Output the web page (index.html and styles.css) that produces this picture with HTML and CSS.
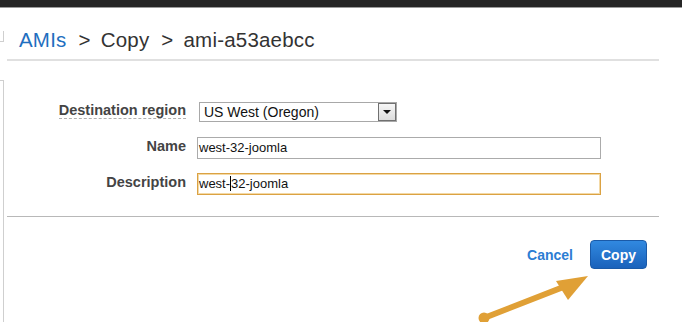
FILE: index.html
```html
<!DOCTYPE html>
<html lang="en">
<head>
<meta charset="utf-8">
<title>Copy AMI</title>
<link rel="stylesheet" href="styles.css">
</head>
<body>
<div class="topbar"></div>
<div class="layout">
  <div class="rail">
    <div class="rail-gap1"></div>
    <div class="rail-box"></div>
    <div class="rail-gap2"></div>
    <div class="rail-panel"></div>
  </div>
  <div class="main">
    <div class="crumbs">
      <a class="crumb-link" href="#">AMIs</a><span class="sep">&gt;</span><span class="crumb">Copy</span><span class="sep">&gt;</span><span class="crumb">ami-a53aebcc</span>
    </div>
    <div class="form">
      <label class="label label-help">Destination region</label>
      <div class="select">
        <span class="select-text">US West (Oregon)</span>
        <span class="select-btn"><span class="tri"></span></span>
      </div>
      <label class="label">Name</label>
      <div class="field">west-32-joomla</div>
      <label class="label">Description</label>
      <div class="field field-focus">west-<span class="caret"></span>32-joomla</div>
    </div>
    <div class="actions">
      <a class="cancel" href="#">Cancel</a>
      <button class="btn-primary" type="button">Copy</button>
    </div>
  </div>
</div>
<svg class="annot" width="682" height="322" viewBox="0 0 682 322">
  <line x1="484" y1="318" x2="566" y2="286" stroke="#e0a036" stroke-width="6" stroke-linecap="round"/>
  <circle cx="484" cy="318" r="5.5" fill="#e0a036"/>
  <polygon points="588,276 556,281 568,300" fill="#e0a036"/>
</svg>
</body>
</html>
```
FILE: styles.css
```css
html, body {
  margin: 0;
  padding: 0;
  background: #fff;
  font-family: "Liberation Sans", Arial, sans-serif;
  overflow: hidden;
}

.topbar {
  height: 7px;
  background: #252525;
  border-bottom: 1px solid #9a9a9a;
}

.layout {
  display: flex;
  min-height: calc(100vh - 8px);
}

.rail {
  width: 4px;
  display: flex;
  flex-direction: column;
}

.rail-gap1 { height: 23px; }
.rail-box {
  height: 10px;
  border-right: 1px solid #cfcfcf;
  border-bottom: 1px solid #cfcfcf;
}
.rail-gap2 { height: 38px; }
.rail-panel {
  flex: 1;
  border-right: 1px solid #cfcfcf;
  border-top: 1px solid #cfcfcf;
}

.main {
  margin-left: 3px;
  width: 652px;
}

.crumbs {
  padding: 20px 0 7px 12px;
  font-size: 20.5px;
  line-height: 24px;
  color: #333;
  border-bottom: 2px solid #e0e0e0;
  letter-spacing: 0.2px;
}

.crumb-link {
  color: #1f6fc0;
  text-decoration: none;
}

.sep {
  margin: 0 10px 0 12px;
}

.form {
  display: grid;
  grid-template-columns: 179px 404px;
  grid-auto-rows: 22px;
  column-gap: 11px;
  row-gap: 14px;
  padding: 40px 0 21px 0;
  border-bottom: 1px solid #b8b8b8;
}

.label {
  justify-self: end;
  align-self: start;
  padding-top: 1px;
  font-size: 14.5px;
  line-height: 16px;
  font-weight: bold;
  color: #444;
}

.label-help {
  border-bottom: 1px dashed #b0b0b0;
}

.select {
  align-self: center;
  margin-left: 2px;
  width: 198px;
  height: 20px;
  box-sizing: border-box;
  border: 1px solid #a8a8a8;
  display: flex;
  background: #fff;
}

.select-text {
  flex: 1;
  padding-left: 4px;
  font-size: 14px;
  line-height: 18px;
  color: #111;
}

.select-btn {
  width: 16px;
  border: 1px solid #707070;
  background: linear-gradient(#f6f6f6, #dcdcdc);
  display: flex;
  align-items: center;
  justify-content: center;
}

.tri {
  width: 0;
  height: 0;
  border-left: 4px solid transparent;
  border-right: 4px solid transparent;
  border-top: 4px solid #111;
}

.field {
  height: 22px;
  box-sizing: border-box;
  border: 1px solid #ababab;
  padding-left: 1px;
  font-size: 13px;
  line-height: 20px;
  color: #111;
  white-space: nowrap;
}

.field-focus {
  border-color: #dba243;
  box-shadow: inset 0 0 0 1px #f3d9a6;
}

.caret {
  display: inline-block;
  width: 1px;
  height: 15px;
  background: #000;
  vertical-align: -3px;
}

.actions {
  display: flex;
  justify-content: flex-end;
  align-items: center;
  gap: 17px;
  padding: 23px 12px 0 0;
}

.cancel {
  font-size: 14px;
  font-weight: bold;
  color: #2b7dd3;
  text-decoration: none;
}

.btn-primary {
  width: 57px;
  height: 29px;
  padding: 0;
  border: 1px solid #1a5aa8;
  border-radius: 4px;
  background: linear-gradient(#3189e0, #1a62bb);
  color: #fff;
  font-family: "Liberation Sans", Arial, sans-serif;
  font-size: 14px;
  font-weight: bold;
}

.annot {
  position: absolute;
  left: 0;
  top: 0;
  pointer-events: none;
}
```
